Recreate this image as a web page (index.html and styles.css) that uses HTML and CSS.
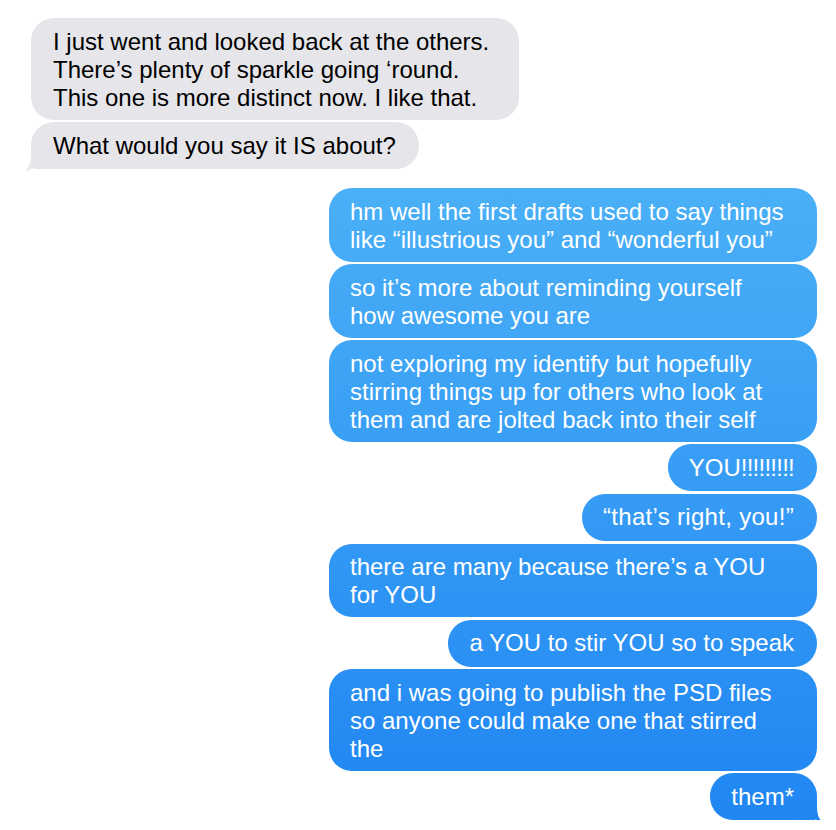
FILE: index.html
```html
<!DOCTYPE html>
<html lang="en">
<head>
<meta charset="utf-8">
<title>Messages</title>
<link rel="stylesheet" href="styles.css">
</head>
<body>
<main class="thread">
  <section class="group incoming">
    <p class="bubble wide">I just went and looked back at the others.<br>There’s plenty of sparkle going ‘round.<br>This one is more distinct now. I like that.</p>
    <p class="bubble tail">What would you say it IS about?</p>
  </section>
  <section class="group outgoing">
    <p class="bubble wide">hm well the first drafts used to say things<br>like “illustrious you” and “wonderful you”</p>
    <p class="bubble wide">so it’s more about reminding yourself<br>how awesome you are</p>
    <p class="bubble wide">not exploring my identify but hopefully<br>stirring things up for others who look at<br>them and are jolted back into their self</p>
    <p class="bubble">YOU<span class="bang">!!!!!!!!!</span></p>
    <p class="bubble quote">“that’s right, you!”</p>
    <p class="bubble wide">there are many because there’s a YOU<br>for YOU</p>
    <p class="bubble">a YOU to stir YOU so to speak</p>
    <p class="bubble wide">and i was going to publish the PSD files<br>so anyone could make one that stirred<br>the</p>
    <p class="bubble tail">them*</p>
  </section>
</main>
</body>
</html>
```
FILE: styles.css
```css
html, body {
  margin: 0;
  background: #ffffff;
}

body {
  font-family: "Liberation Sans", Arial, "Helvetica Neue", sans-serif;
  font-size: 24px;
  line-height: 28px;
  -webkit-font-smoothing: antialiased;
}

.thread {
  display: flex;
  flex-direction: column;
  gap: 19px;
  padding: 18px 19px 0 31px;
}

.group {
  display: flex;
  flex-direction: column;
  gap: 2.6px;
}

.incoming {
  align-items: flex-start;
}

.outgoing {
  align-items: flex-end;
}

.bubble {
  position: relative;
  margin: 0;
  box-sizing: border-box;
  max-width: 488px;
  min-height: 47px;
  border-radius: 23px;
  padding: 9.5px 23px 8px 22px;
  white-space: nowrap;
}

.wide {
  width: 488px;
}

.bang {
  letter-spacing: -0.75px;
}

.quote {
  letter-spacing: 0.3px;
}

.incoming .bubble {
  background: #e5e5ea;
  color: #000000;
}

.outgoing .bubble {
  color: #ffffff;
  padding: 9.5px 23px 8px 21px;
  background: linear-gradient(to bottom, rgb(86, 188, 248) 0px, rgb(31, 133, 242) 830px) fixed;
}

.tail::after {
  content: "";
  position: absolute;
  bottom: -2px;
  width: 28px;
  height: 24px;
  background: inherit;
}

.outgoing .tail::after {
  right: -7px;
  clip-path: path('M0 0H21V8C21 17 23.5 21.5 27 24C24 24 21.5 23 20 21C18 22 15 22 12 22H0Z');
}

.incoming .tail::after {
  left: -7px;
  clip-path: path('M28 0H7V8C7 17 4.5 21.5 1 24C4 24 6.5 23 8 21C10 22 13 22 16 22H28Z');
}
```
